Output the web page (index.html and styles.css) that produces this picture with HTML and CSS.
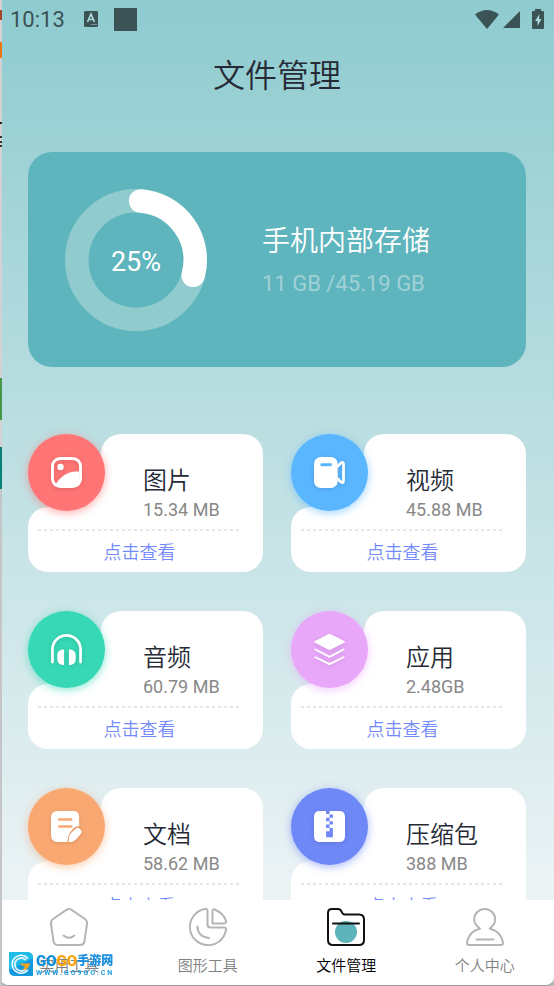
FILE: index.html
```html
<!DOCTYPE html>
<html lang="zh-CN">
<head>
<meta charset="utf-8">
<meta name="viewport" content="width=device-width, initial-scale=1">
<title>文件管理</title>
<link rel="stylesheet" href="styles.css">
</head>
<body>
<div class="app">
  <div class="status">
    <div class="status-group">
      <span class="clock">10:13</span>
      <svg class="status-kbd" viewBox="0 0 16 16" width="16" height="16"><rect x="1" width="14" height="16" rx="1.5" fill="#3b5355"/><path d="M4.5 11 8 3l3.500 8M5.700 8.500h4.600" fill="none" stroke="#a9d9dc" stroke-width="1.700"/><path d="M8.500 13.500h5.500" stroke="#a9d9dc" stroke-dasharray="1 1"/></svg>
      <span class="status-square"></span>
    </div>
    <div class="status-group status-right">
      <svg viewBox="0 0 24 19" width="24" height="19"><path d="M0 4.500Q12-4.500 24 4.500L12 19z" fill="#3b5355"/></svg>
      <svg class="signal" viewBox="0 0 17 17" width="17" height="17"><path d="M17 0v17H0z" fill="#3b5355"/></svg>
      <svg class="battery" viewBox="0 0 12 20" width="12" height="20"><path d="M3 0h6v2h2q1 0 1 1v16q0 1-1 1H1q-1 0-1-1V3q0-1 1-1h2z" fill="#3b5355"/><path d="M7.500 5 3 12h2.500v5L9.500 10H7z" fill="#a9d9dc"/></svg>
    </div>
  </div>

  <h1 class="title">文件管理</h1>

  <main class="content">
    <section class="storage">
      <div class="ring">
        <svg viewBox="0 0 142 142" width="142" height="142">
          <circle cx="71" cy="71" r="59.200" fill="none" stroke="#90cbce" stroke-width="23.500"/>
          <path d="M75.600 12A59.200 59.200 0 0 1 128.200 86.300" fill="none" stroke="#fff" stroke-width="23.500" stroke-linecap="round"/>
        </svg>
        <span class="ring-value">25%</span>
      </div>
      <div class="storage-text">
        <h2 class="storage-name">手机内部存储</h2>
        <p class="storage-size">11 GB /45.19 GB</p>
      </div>
    </section>

    <section class="grid">
      <article class="card">
        <span class="badge badge-image"><svg viewBox="0 0 32 32" width="31" height="31"><rect x="1.500" y="1.500" width="29" height="29" rx="8" fill="none" stroke="#fff" stroke-width="3"/><circle cx="9.800" cy="10.300" r="3.300" fill="#fff"/><path d="M4 29C9 22 15 14 29 15v9q0 6-6 6H7z" fill="#fff"/></svg></span>
        <div class="info"><h3 class="name">图片</h3><p class="size">15.34 MB</p></div>
        <a class="view" href="#images">点击查看</a>
      </article>
      <article class="card">
        <span class="badge badge-video"><svg viewBox="0 0 32 32" width="31" height="31"><rect x="0" y="0" width="24.500" height="32" rx="7" fill="#fff"/><path d="M8 8h9" stroke="#5ab6ff" stroke-width="3" stroke-linecap="round"/><path d="M24 10 28 6q2.500-1.500 2.500 2v16q0 3.500-2.500 2L24 22" fill="none" stroke="#fff" stroke-width="2.800"/></svg></span>
        <div class="info"><h3 class="name">视频</h3><p class="size">45.88 MB</p></div>
        <a class="view" href="#videos">点击查看</a>
      </article>
      <article class="card">
        <span class="badge badge-audio"><svg viewBox="0 0 32 32" width="31" height="31"><path d="M1.500 29V16a14.500 14.500 0 0 1 29 0V29" fill="none" stroke="#fff" stroke-width="2.800" stroke-linecap="round"/><path d="M13.500 16v16q-7 0-7-6v-4q0-6 7-6zM18.500 16v16q7 0 7-6v-4q0-6-7-6z" fill="#fff"/></svg></span>
        <div class="info"><h3 class="name">音频</h3><p class="size">60.79 MB</p></div>
        <a class="view" href="#audio">点击查看</a>
      </article>
      <article class="card">
        <span class="badge badge-apps"><svg viewBox="0 0 32 32" width="31" height="31"><path d="M14.500.3q1.500-.8 3 0L31.500 7.500q1 .7 0 1.400L17.500 16q-1.500.8-3 0L.5 8.900q-1-.7 0-1.400z" fill="#fff"/><path d="M1.500 16 16 23.500 30.500 16M1.500 24 16 31 30.500 24" fill="none" stroke="#fff" stroke-width="2" stroke-linecap="round" stroke-linejoin="round"/></svg></span>
        <div class="info"><h3 class="name">应用</h3><p class="size">2.48GB</p></div>
        <a class="view" href="#apps">点击查看</a>
      </article>
      <article class="card">
        <span class="badge badge-docs"><svg viewBox="0 0 32 32" width="31" height="31"><path d="M7 0h16q6 0 6 6v9.500q-4 0-6.500 3-5 5-5.500 13.500H7q-7 0-7-7V7q0-7 7-7z" fill="#fff"/><path d="M8.500 8.700h12.500M8.500 16h12.500" stroke="#f9a872" stroke-width="2.500" stroke-linecap="round"/><path d="M18.500 32q-.8-6.500 3-10l4-3.800q2-1.700 4 0l1.500 1.600q1.500 1.700 0 3.400L27 28Q23.500 32 18.500 32z" fill="#fff"/></svg></span>
        <div class="info"><h3 class="name">文档</h3><p class="size">58.62 MB</p></div>
        <a class="view" href="#docs">点击查看</a>
      </article>
      <article class="card">
        <span class="badge badge-zip"><svg viewBox="0 0 32 32" width="31" height="31"><path d="M6 0h6.500v3H16V0h10q6 0 6 6v20q0 6-6 6H6q-6 0-6-6V6Q0 0 6 0z" fill="#fff"/><path d="M16 3.500h3.500V7H16zM12.500 7H16v3.500h-3.500zM16 10.500h3.500V14H16zM12.500 14H16v3.500h-3.500zM16 17.500h3.500V27h-7v-6H16z" fill="#6f88f7"/></svg></span>
        <div class="info"><h3 class="name">压缩包</h3><p class="size">388 MB</p></div>
        <a class="view" href="#archives">点击查看</a>
      </article>
    </section>
  </main>

  <nav class="tabs">
    <a class="tab" href="#tools">
      <svg viewBox="0 0 38 38" width="38" height="38" fill="none" stroke="#b5b5b5" stroke-width="2" stroke-linecap="round" stroke-linejoin="round"><path d="M16 2.200q3-2.200 6 0L35 11q2.500 2 2 5l-2.500 17q-.5 4-4.500 4H8q-4 0-4.500-4L1 16q-.5-3 2-5z"/><path d="M13.500 27.500q5.500 4.500 11 0"/></svg>
      <span>实用工具</span>
    </a>
    <a class="tab" href="#shapes">
      <svg viewBox="0 0 38 38" width="38" height="38" fill="none" stroke="#b5b5b5" stroke-width="2" stroke-linecap="round" stroke-linejoin="round"><path d="M16 1q2.500-.4 2.500 2v13.500q0 3 3 3H35q2.500 0 2 2.500A18.200 18.200 0 1 1 16 1z"/><path d="M23.500 3q0-2.300 2-1.500Q34.500 5 37 13q.4 2.500-2 2.500H23.500z"/><path d="M8.500 18.500q0 10 11.500 11.500"/></svg>
      <span>图形工具</span>
    </a>
    <a class="tab tab-active" href="#files" aria-current="page">
      <svg viewBox="0 0 38 38" width="38" height="38" fill="none" stroke="#111" stroke-width="2" stroke-linecap="round" stroke-linejoin="round"><circle cx="19" cy="24" r="11" fill="#5fb4bb" stroke="none"/><path d="M1 5q0-4 4-4h6q2.500 0 3.500 2.500Q15.500 6.500 18 6.500h14q5 0 5 5V32q0 5-5 5H6q-5 0-5-5z"/><path d="M6 15.500h26"/></svg>
      <span>文件管理</span>
    </a>
    <a class="tab" href="#me">
      <svg viewBox="0 0 38 38" width="38" height="38" fill="none" stroke="#b5b5b5" stroke-width="2" stroke-linecap="round" stroke-linejoin="round"><path d="M14 20.500C9 17 8.200 13 8.200 11.500a10.300 10.300 0 0 1 21 0c0 2-.8 5.500-5.500 9Q35.500 24 37 34.500q.2 2.500-2 2.500H3q-2.200 0-2-2.500Q2.500 24 14 20.500z"/><path d="M10.500 31.500h17"/></svg>
      <span>个人中心</span>
    </a>
  </nav>
</div>

<div class="watermark">
  <svg viewBox="0 0 24 24" width="24" height="24"><path d="M0 0h18q6 0 6 6v18H6q-6 0-6-6z" fill="#1499df"/><path d="M0 0h18q6 0 6 6L0 18z" fill="#20bde8"/><path d="M19 6.500A9 9 0 1 0 19 18" fill="none" stroke="#fff" stroke-width="1.500"/><path d="M17 8a6.500 6.500 0 1 0 0 9" fill="none" stroke="#d7f2fc" stroke-width="2"/><path d="M11 11.500h10q-1 6-7 6.500l2-4q-3 .5-5-2.500z" fill="#f8a51b"/></svg>
  <div class="watermark-text">
    <span class="watermark-name"><b class="wm-blue">GO</b><b class="wm-gold">GO</b><b class="wm-cn">手游网</b></span>
    <span class="watermark-url">WWW.GO9GO.CN</span>
  </div>
</div>
</body>
</html>
```
FILE: styles.css
```css
* { box-sizing: border-box; }

body,
h1,
h2,
h3,
p { margin: 0; font-weight: 400; }

body {
  background: #b5b7bb;
  font-family: Roboto, "Noto Sans CJK SC", sans-serif;
  color: #252a35;
}

/* sliver of the desktop behind the emulator window */
body::before {
  content: "";
  position: absolute;
  z-index: 1;
  inset: 0 auto 0 0;
  width: 2px;
  background: linear-gradient(#d3d1d3 10px, #a8452e 10px 20px, #d3d1d3 20px 42px, #e87510 42px 58px, #d3d1d3 58px 122px, #222 122px 124px, #d3d1d3 124px 136px, #333 136px 138px, #d3d1d3 138px 141px, #333 141px 143px, #d3d1d3 143px 145px, #333 145px 147px, #d3d1d3 147px 378px, #45984a 378px 420px, #d3d1d3 420px 447px, #078078 447px 489px, #c5c5c8 489px);
}

.app {
  display: flex;
  flex-direction: column;
  height: 100vh;
  border-bottom: 1px solid #999;
  border-radius: 0 0 9px 9px;
  overflow: hidden;
  background: linear-gradient(#8ecbcf, #ecf3f5 900px);
}

.status {
  display: flex;
  justify-content: space-between;
  align-items: center;
  height: 38px;
  padding: 0 10px;
  flex: none;
}
.status-group { display: flex; align-items: center; }
.clock { font-size: 22px; line-height: 38px; padding-top: 2px; color: #3b5355; margin-right: 18px; }
.status-square { width: 23px; height: 23px; margin-left: 15px; background: #3b5355; }
.signal { margin: 0 12px 0 4px; }

.title {
  flex: none;
  font-size: 32px;
  font-weight: 350;
  line-height: 48px;
  padding: 14px 0;
  text-align: center;
}

.content {
  flex: 1;
  min-height: 0;
  overflow-y: auto;
  scrollbar-width: none;
  padding: 38px 28px 28px;
}

.storage {
  display: flex;
  align-items: center;
  gap: 55px;
  padding: 37px 36px 36px 37px;
  border-radius: 24px;
  background: #5fb5bd;
  color: #fff;
}
.ring { display: grid; place-items: center; }
.ring > * { grid-area: 1 / 1; }
.ring-value { font-size: 27px; line-height: 32px; padding-top: 4px; }
.storage-text { padding-top: 4px; }
.storage-name { font-size: 28px; line-height: 44px; font-weight: 350; }
.storage-size { font-size: 22px; line-height: 40px; color: #a0d1d6; }

.grid {
  display: grid;
  grid-template-columns: 1fr 1fr;
  gap: 39px 28px;
  margin-top: 67px;
}

/* white panel with its top-left corner cut out around the badge */
.card {
  position: relative;
  isolation: isolate;
  display: flex;
  flex-direction: column;
  height: 138px;
  background: linear-gradient(#fff, #fff) 58px 58px / 20px 20px no-repeat;
}
.card::before,
.card::after {
  content: "";
  position: absolute;
  z-index: -1;
  background: #fff;
}
.card::before { inset: 0 0 20px 73px; border-radius: 20px 20px 0 0; }
.card::after { inset: 73px 0 0 0; border-radius: 20px 0 20px 20px; }

.badge {
  position: absolute;
  top: 0;
  left: 0;
  display: grid;
  place-items: center;
  width: 77px;
  height: 77px;
  border-radius: 50%;
}
.badge svg { filter: drop-shadow(0 1px 2px rgba(0, 0, 0, 0.12)); }
.badge-image { background: #ff7474; box-shadow: 0 2px 8px #ff747499; }
.badge-video { background: #5ab6ff; box-shadow: 0 2px 8px #5ab6ff99; }
.badge-audio { background: #37d8b5; box-shadow: 0 2px 8px #37d8b599; }
.badge-apps { background: #e9a7fa; box-shadow: 0 2px 8px #e9a7fa99; }
.badge-docs { background: #f9a872; box-shadow: 0 2px 8px #f9a87299; }
.badge-zip { background: #6f88f7; box-shadow: 0 2px 8px #6f88f799; }

.info { padding: 30px 0 7px 115px; }
.name { font-size: 24px; line-height: 34px; font-weight: 350; }
.size { font-size: 18px; line-height: 24px; color: #888; }
.view {
  padding-top: 10px;
  margin: 0 24px 0 10px;
  font-size: 18px;
  font-weight: 350;
  line-height: 28px;
  text-align: center;
  text-decoration: none;
  text-indent: 2px;
  color: #7489fa;
  background: repeating-linear-gradient(90deg, #e6e6e6 0 3px, transparent 3px 6px) top / 100% 2px no-repeat;
}

.tabs {
  flex: none;
  display: grid;
  grid-template-columns: repeat(4, 1fr);
  padding: 8px 0 8px;
  background: #fff;
}
.tab {
  display: flex;
  flex-direction: column;
  align-items: center;
  gap: 9px;
  font-size: 15px;
  font-weight: 350;
  line-height: 22px;
  color: #808080;
  text-decoration: none;
}
.tab-active { color: #000; }

.watermark {
  position: fixed;
  left: 9px;
  bottom: 10px;
  display: flex;
  align-items: center;
  gap: 3px;
}
.watermark-text { display: flex; flex-direction: column; }
.watermark-name { display: flex; align-items: center; font-size: 15px; line-height: 18px; }
.watermark-name b { font-weight: 900; }
.wm-blue { color: #0f8fdc; }
.wm-gold { color: #fba30c; }
.watermark-name .wm-cn { font-size: 12px; color: #1a8fe0; }
.watermark-url { font-size: 7px; line-height: 6px; font-weight: 700; letter-spacing: 2px; color: #1a9ce0; }
```
